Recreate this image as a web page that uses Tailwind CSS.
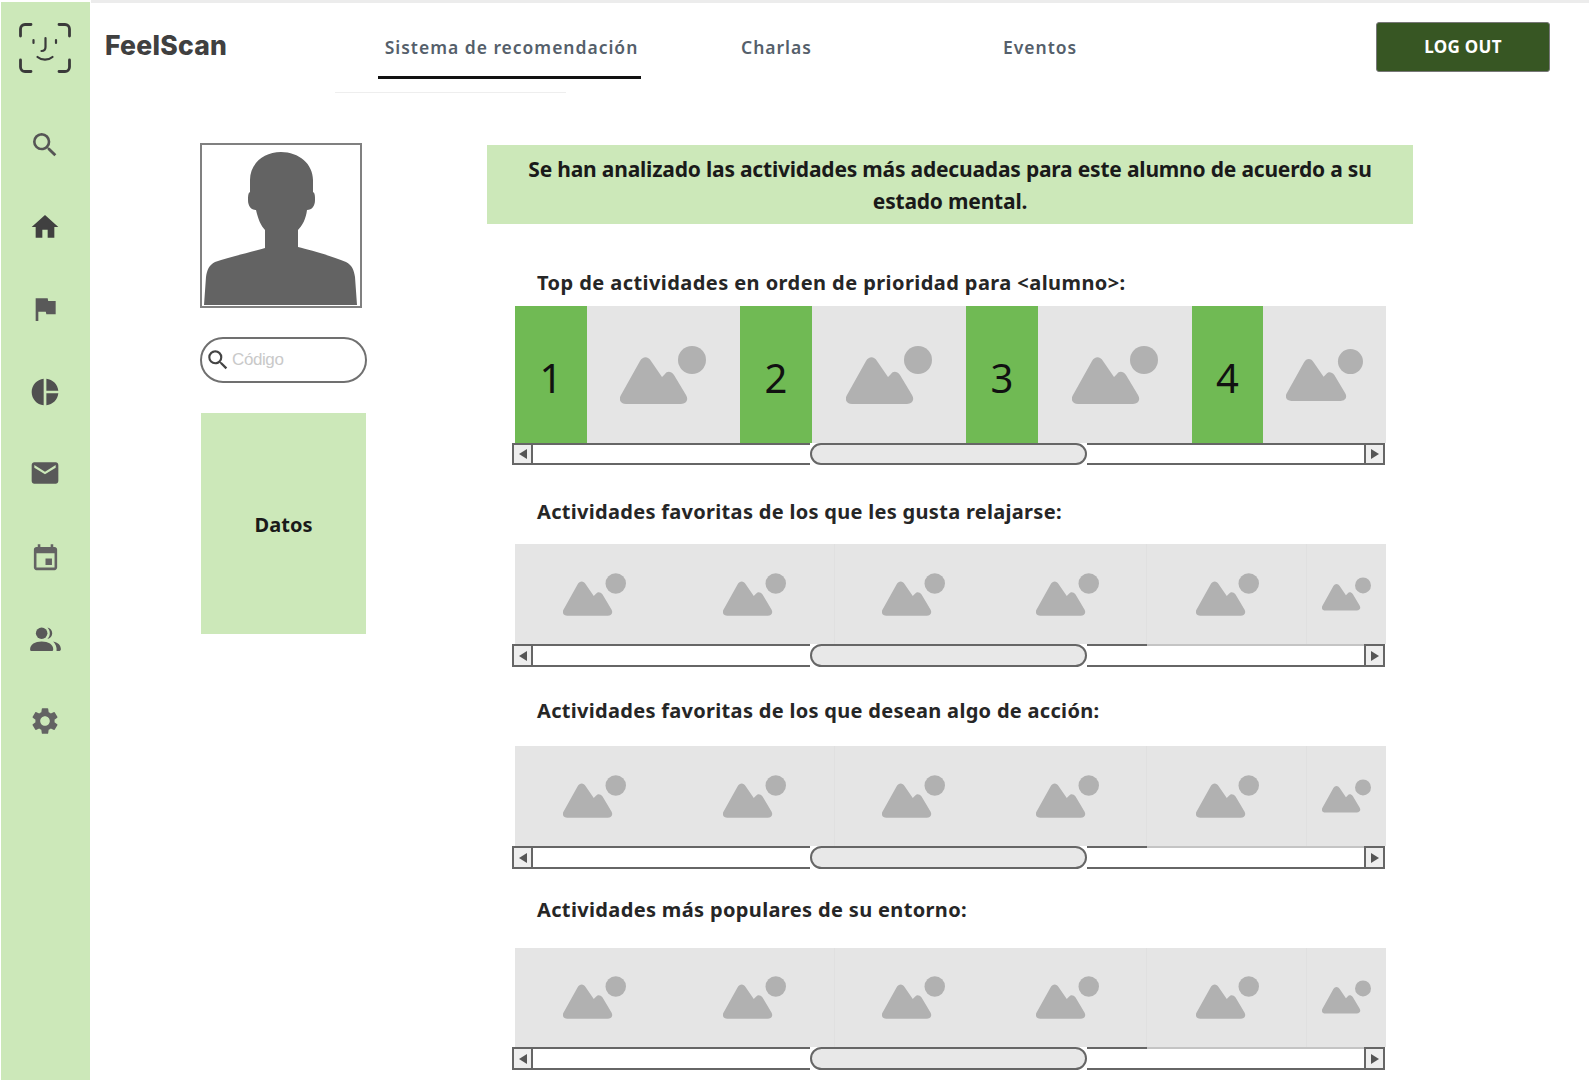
<!DOCTYPE html>
<html lang="es">
<head>
<meta charset="utf-8">
<title>FeelScan</title>
<script src="https://cdn.jsdelivr.net/npm/@tailwindcss/browser@4"></script>
</head>
<body class="w-[1589px] h-[1080px] overflow-hidden bg-white font-['Noto_Sans',sans-serif] text-[#262626]">
<svg class="hidden">
  <symbol id="ph" viewBox="0 0 86 58"><path fill="#b1b1b1" d="M6 58h55c5 0 8-4 5-9L54 29c-3-4-7-4-9-1l-3 3L31 15c-3-5-8-5-11 0L1 49c-3 5 0 9 5 9z"/><circle fill="#b1b1b1" cx="72" cy="14" r="14"/></symbol>
  <symbol id="tl" viewBox="0 0 10 12"><path fill="#555" d="M9 1v10L1 6z"/></symbol>
  <symbol id="tr" viewBox="0 0 10 12"><path fill="#555" d="M1 1v10l8-5z"/></symbol>
</svg>
<div class="flex h-[1080px]">
  <aside class="w-[89px] ml-[1px] mr-[1px] mt-[2px] pr-[1px] bg-[#cce8b9] flex flex-col items-center shrink-0">
    <div class="h-[102px] w-full pt-[21px] pl-[18px]">
      <svg width="52" height="50" viewBox="0 0 52 50" fill="none" stroke="#3a3a3a" stroke-width="2.8" stroke-linecap="round"><path d="M1.500 13V6a4.500 4.500 0 0 1 4.500-4.500H12M40 1.500h6A4.500 4.500 0 0 1 50.500 6v7M50.500 37v7a4.500 4.500 0 0 1-4.500 4.500H40M12 48.500H6A4.500 4.500 0 0 1 1.500 44v-7"/><path stroke-width="2.200" d="M14.500 17v3M37 17v3M26.500 15v9c0 3-1.500 4-4 4M18.500 34c4 3.500 11 3.500 15 0"/></svg>
    </div>
    <div class="h-[82px] flex items-center justify-center"><svg width="32" height="32" viewBox="0 0 24 24" fill="#555"><path d="M15.500 14h-.79l-.28-.27A6.471 6.471 0 0 0 16 9.500 6.500 6.500 0 1 0 9.500 16c1.610 0 3.090-.59 4.230-1.570l.27.28v.79l5 4.990L20.490 19l-4.990-5zm-6 0C7.010 14 5 11.990 5 9.500S7.010 5 9.500 5 14 7.010 14 9.500 11.990 14 9.500 14z"/></svg></div>
    <div class="h-[82px] flex items-center justify-center"><svg width="32" height="32" viewBox="0 0 24 24" fill="#404040"><path d="M10 20v-6h4v6h5v-8h3L12 3 2 12h3v8z"/></svg></div>
    <div class="h-[82px] flex items-center justify-center"><svg width="32" height="32" viewBox="0 0 24 24" fill="#595959"><path d="M14.400 6L14 4H5v17h2v-7h5.600l.4 2h7V6z"/></svg></div>
    <div class="h-[82px] flex items-center justify-center"><svg width="32" height="32" viewBox="0 0 24 24" fill="#505050" class="translate-y-[1px]"><path d="M11 2v20c-5.070-.5-9-4.790-9-10s3.930-9.500 9-10zm2.030 0v8.990H22c-.47-4.740-4.240-8.520-8.970-8.990zm0 11.010V22c4.740-.47 8.500-4.250 8.970-8.990h-8.970z"/></svg></div>
    <div class="h-[82px] flex items-center justify-center"><svg width="32" height="32" viewBox="0 0 24 24" fill="#595959"><path d="M20 4H4c-1.100 0-1.990.9-1.990 2L2 18c0 1.100.9 2 2 2h16c1.100 0 2-.9 2-2V6c0-1.100-.9-2-2-2zm0 4l-8 5-8-5V6l8 5 8-5v2z"/></svg></div>
    <div class="h-[82px] flex items-center justify-center"><svg width="31" height="31" viewBox="0 0 24 24" fill="#636363" class="translate-y-[3px]"><path d="M17 12h-5v5h5v-5zM16 1v2H8V1H6v2H5c-1.110 0-1.990.9-1.990 2L3 19c0 1.100.89 2 2 2h14c1.100 0 2-.9 2-2V5c0-1.100-.9-2-2-2h-1V1h-2zm3 18H5V8h14v11z"/></svg></div>
    <div class="h-[82px] flex items-center justify-center"><svg width="31" height="25" viewBox="0 0 32 26" fill="#595959" class="translate-y-[2px]"><circle cx="12" cy="6.500" r="6"/><path d="M1 25c-1 0-1-1-1-2 0-5 5-8 12-8s12 3 12 8c0 1 0 2-1 2z"/><path d="M18 .5c3 .5 5 3 5 6s-2 5.500-5 6c1.500-1.500 2.500-3.500 2.500-6S19.500 2 18 .5zM24 15c4.500 1 8 3.500 8 8 0 1-.5 2-1.500 2h-3c.5-4-1-7.500-3.500-10z"/></svg></div>
    <div class="h-[82px] flex items-center justify-center"><svg width="32" height="32" viewBox="0 0 24 24" fill="#636363" class="translate-y-[2px]"><path d="M19.140 12.940c.04-.3.06-.61.06-.94 0-.32-.02-.64-.07-.94l2.030-1.580a.49.49 0 0 0 .12-.61l-1.920-3.320a.488.488 0 0 0-.59-.22l-2.390.96c-.5-.38-1.030-.7-1.620-.94l-.36-2.540a.484.484 0 0 0-.48-.41h-3.840c-.24 0-.43.17-.47.41l-.36 2.540c-.59.24-1.130.57-1.620.94l-2.390-.96c-.22-.08-.47 0-.59.22L2.740 8.870c-.12.21-.08.47.12.61l2.030 1.580c-.05.3-.09.63-.09.94s.02.64.07.94l-2.030 1.580a.49.49 0 0 0-.12.61l1.920 3.320c.12.22.37.29.59.22l2.390-.96c.5.38 1.030.7 1.620.94l.36 2.540c.05.24.24.41.48.41h3.840c.24 0 .44-.17.47-.41l.36-2.540c.59-.24 1.130-.56 1.620-.94l2.390.96c.22.08.47 0 .59-.22l1.920-3.320c.12-.22.07-.47-.12-.61l-2.010-1.580zM12 15.600c-1.980 0-3.600-1.620-3.600-3.600s1.620-3.600 3.600-3.600 3.600 1.620 3.600 3.600-1.620 3.600-3.600 3.600z"/></svg></div>
  </aside>

  <div class="flex-1 flex flex-col min-w-0">
    <div class="h-[3px] bg-[#ececec] shrink-0"></div>
    <header class="h-[97px] flex shrink-0 relative">
      <div class="w-[287px] pl-[14px] pt-[23px] font-['Inter',sans-serif] font-extrabold text-[26.500px] leading-[38px] tracking-[0.25px] text-[#404040]">FeelScan</div>
      <nav class="w-[263px] h-[76px] border-b-[3px] border-[#111] text-center pt-[29px] text-[17.500px] leading-[30px] font-semibold text-[#555f6b] tracking-[0.98px] pl-[4px]">Sistema de recomendación</nav>
      <div class="w-[202px] pt-[29px] pl-[100px] text-[17.500px] leading-[30px] font-semibold text-[#555f6b] tracking-[0.98px] whitespace-nowrap">Charlas</div>
      <div class="w-[533px] pt-[29px] pl-[160px] text-[17.500px] leading-[30px] font-semibold text-[#555f6b] tracking-[0.98px] whitespace-nowrap">Eventos</div>
      <button class="w-[174px] h-[50px] mt-[19px] bg-[#375623] rounded-[3px] border border-[#777] text-white font-bold text-[17px] tracking-[0.3px] leading-[48px] text-center">LOG OUT</button>
      <div class="absolute left-[244px] top-[89px] w-[231px] h-[1px] bg-[#eeeeee]"></div>
    </header>

    <main class="flex flex-1 min-h-0">
      <div class="w-[167px] ml-[109px] pt-[43px] shrink-0">
        <div class="w-[162px] h-[165px] border-2 border-[#808080] overflow-hidden">
          <svg width="158" height="161" viewBox="2 2 158 161"><path fill="#636363" d="M81 9c-18 0-31 12-31 28v12c-2 1-2 4-2 8 0 6 3 10 8 10 2 9 5 16 9 20v18c-13 4-36 9-50 14-6 3-8 8-9 15l-2 28h153l-2-28c-1-7-3-12-9-15-14-6-36-12-48-15V87c4-4 8-11 9-20 5 0 8-4 8-10 0-4 0-7-2-8V37C113 21 99 9 81 9z"/></svg>
        </div>
        <div class="mt-[29px] w-[167px] h-[46px] rounded-full border-2 border-[#707070] flex items-center pl-[3px] font-['Liberation_Sans',sans-serif] text-[17px] text-[#c9c9c9] tracking-[-0.4px]">
          <svg width="26" height="26" viewBox="0 0 24 24" fill="#444"><path d="M15.500 14h-.79l-.28-.27A6.471 6.471 0 0 0 16 9.500 6.500 6.500 0 1 0 9.500 16c1.610 0 3.090-.59 4.230-1.570l.27.28v.79l5 4.990L20.490 19l-4.990-5zm-6 0C7.010 14 5 11.990 5 9.500S7.010 5 9.500 5 14 7.010 14 9.500 11.990 14 9.500 14z"/></svg>
          <span class="ml-[1px]">Código</span>
        </div>
        <div class="mt-[30px] ml-[1px] w-[165px] h-[221px] bg-[#cce8b9] flex items-center justify-center font-bold text-[20px] text-[#1a1a1a] pt-[3px]">Datos</div>
      </div>

      <div class="w-[926px] ml-[120px] pt-[45px] shrink-0">
        <div class="h-[79px] bg-[#cce8b9] text-center font-bold text-[21px] leading-[32px] pt-[8px] text-[#1a1a1a] tracking-[-0.2px] px-[20px]">Se han analizado las actividades más adecuadas para este alumno de acuerdo a su<br>estado mental.</div>

        <div class="ml-[25px] w-[873px]">
          <h2 class="mt-[44px] mb-[8px] ml-[25px] font-bold text-[20px] leading-[30px] text-[#262626] tracking-[0.43px]">Top de actividades en orden de prioridad para &lt;alumno&gt;:</h2>
          <div class="ml-[3px] w-[871px] h-[137px] bg-[#e5e5e5] flex">
            <div class="w-[72px] bg-[#70ba54] flex items-center justify-center text-[40px] text-[#111] pt-[6px]">1</div>
            <div class="w-[153px] flex items-center justify-center"><svg width="86" height="58" class="ml-[-1px]"><use href="#ph"/></svg></div>
            <div class="w-[72px] bg-[#70ba54] flex items-center justify-center text-[40px] text-[#111] pt-[6px]">2</div>
            <div class="w-[154px] flex items-center justify-center"><svg width="86" height="58" class="ml-[-1px]"><use href="#ph"/></svg></div>
            <div class="w-[72px] bg-[#70ba54] flex items-center justify-center text-[40px] text-[#111] pt-[6px]">3</div>
            <div class="w-[154px] flex items-center justify-center"><svg width="86" height="58" class="ml-[-1px]"><use href="#ph"/></svg></div>
            <div class="w-[71px] bg-[#70ba54] flex items-center justify-center text-[40px] text-[#111] pt-[6px]">4</div>
            <div class="flex-1 flex items-center justify-center"><svg width="77" height="52" class="ml-[-1px]"><use href="#ph"/></svg></div>
          </div>
          <div class="h-[22px] flex">
            <div class="w-[21px] border-2 border-[#666] bg-[#eeeeee] flex items-center justify-center shrink-0"><svg width="10" height="12"><use href="#tl"/></svg></div>
            <div class="w-[277px] border-y-2 border-[#666] bg-white"></div>
            <div class="w-[277px] rounded-full border-2 border-[#666] bg-[#e8e8e8]"></div>
            <div class="flex-1 border-y-2 border-[#666] bg-white"></div>
            <div class="w-[21px] border-2 border-[#666] bg-[#eeeeee] flex items-center justify-center shrink-0"><svg width="10" height="12"><use href="#tr"/></svg></div>
          </div>

          <h2 class="mt-[32px] mb-[17px] ml-[25px] font-bold text-[20px] leading-[30px] text-[#262626] tracking-[0.3px]">Actividades favoritas de los que les gusta relajarse:</h2>
          <div class="ml-[3px] w-[871px] h-[100px] bg-[#e5e5e5] flex">
            <div class="w-[160px] flex items-center justify-center"><svg width="63" height="43" class="ml-[-1px]"><use href="#ph"/></svg></div>
            <div class="w-[160px] flex items-center justify-center border-r border-[#e0e0e0]"><svg width="63" height="43"><use href="#ph"/></svg></div>
            <div class="w-[157px] flex items-center justify-center"><svg width="63" height="43"><use href="#ph"/></svg></div>
            <div class="w-[155px] flex items-center justify-center border-r border-[#e0e0e0]"><svg width="63" height="43" class="ml-[-3px]"><use href="#ph"/></svg></div>
            <div class="w-[160px] flex items-center justify-center border-r border-[#e0e0e0]"><svg width="63" height="43" class="ml-[1px]"><use href="#ph"/></svg></div>
            <div class="flex-1 flex items-center justify-center"><svg width="49" height="34" class="mt-[-1px]"><use href="#ph"/></svg></div>
          </div>
          <div class="h-[23px] flex">
            <div class="w-[21px] border-2 border-[#666] bg-[#eeeeee] flex items-center justify-center shrink-0"><svg width="10" height="12"><use href="#tl"/></svg></div>
            <div class="w-[277px] border-y-2 border-[#666] bg-white"></div>
            <div class="w-[277px] rounded-full border-2 border-[#666] bg-[#e8e8e8]"></div>
            <div class="w-[60px] border-y-2 border-[#666] bg-white"></div>
            <div class="flex-1 border-y-2 border-t-[#c4c4c4] border-b-[#666] bg-white"></div>
            <div class="w-[21px] border-2 border-[#666] bg-[#eeeeee] flex items-center justify-center shrink-0"><svg width="10" height="12"><use href="#tr"/></svg></div>
          </div>

          <h2 class="mt-[29px] mb-[20px] ml-[25px] font-bold text-[20px] leading-[30px] text-[#262626] tracking-[0.3px]">Actividades favoritas de los que desean algo de acción:</h2>
          <div class="ml-[3px] w-[871px] h-[100px] bg-[#e5e5e5] flex">
            <div class="w-[160px] flex items-center justify-center"><svg width="63" height="43" class="ml-[-1px]"><use href="#ph"/></svg></div>
            <div class="w-[160px] flex items-center justify-center border-r border-[#e0e0e0]"><svg width="63" height="43"><use href="#ph"/></svg></div>
            <div class="w-[157px] flex items-center justify-center"><svg width="63" height="43"><use href="#ph"/></svg></div>
            <div class="w-[155px] flex items-center justify-center border-r border-[#e0e0e0]"><svg width="63" height="43" class="ml-[-3px]"><use href="#ph"/></svg></div>
            <div class="w-[160px] flex items-center justify-center border-r border-[#e0e0e0]"><svg width="63" height="43" class="ml-[1px]"><use href="#ph"/></svg></div>
            <div class="flex-1 flex items-center justify-center"><svg width="49" height="34" class="mt-[-1px]"><use href="#ph"/></svg></div>
          </div>
          <div class="h-[23px] flex">
            <div class="w-[21px] border-2 border-[#666] bg-[#eeeeee] flex items-center justify-center shrink-0"><svg width="10" height="12"><use href="#tl"/></svg></div>
            <div class="w-[277px] border-y-2 border-[#666] bg-white"></div>
            <div class="w-[277px] rounded-full border-2 border-[#666] bg-[#e8e8e8]"></div>
            <div class="w-[60px] border-y-2 border-[#666] bg-white"></div>
            <div class="flex-1 border-y-2 border-t-[#c4c4c4] border-b-[#666] bg-white"></div>
            <div class="w-[21px] border-2 border-[#666] bg-[#eeeeee] flex items-center justify-center shrink-0"><svg width="10" height="12"><use href="#tr"/></svg></div>
          </div>

          <h2 class="mt-[26px] mb-[23px] ml-[25px] font-bold text-[20px] leading-[30px] text-[#262626] tracking-[0.35px]">Actividades más populares de su entorno:</h2>
          <div class="ml-[3px] w-[871px] h-[99px] bg-[#e5e5e5] flex">
            <div class="w-[160px] flex items-center justify-center"><svg width="63" height="43" class="ml-[-1px]"><use href="#ph"/></svg></div>
            <div class="w-[160px] flex items-center justify-center border-r border-[#e0e0e0]"><svg width="63" height="43"><use href="#ph"/></svg></div>
            <div class="w-[157px] flex items-center justify-center"><svg width="63" height="43"><use href="#ph"/></svg></div>
            <div class="w-[155px] flex items-center justify-center border-r border-[#e0e0e0]"><svg width="63" height="43" class="ml-[-3px]"><use href="#ph"/></svg></div>
            <div class="w-[160px] flex items-center justify-center border-r border-[#e0e0e0]"><svg width="63" height="43" class="ml-[1px]"><use href="#ph"/></svg></div>
            <div class="flex-1 flex items-center justify-center"><svg width="49" height="34" class="mt-[-1px]"><use href="#ph"/></svg></div>
          </div>
          <div class="h-[23px] flex">
            <div class="w-[21px] border-2 border-[#666] bg-[#eeeeee] flex items-center justify-center shrink-0"><svg width="10" height="12"><use href="#tl"/></svg></div>
            <div class="w-[277px] border-y-2 border-[#666] bg-white"></div>
            <div class="w-[277px] rounded-full border-2 border-[#666] bg-[#e8e8e8]"></div>
            <div class="w-[60px] border-y-2 border-[#666] bg-white"></div>
            <div class="flex-1 border-y-2 border-t-[#c4c4c4] border-b-[#666] bg-white"></div>
            <div class="w-[21px] border-2 border-[#666] bg-[#eeeeee] flex items-center justify-center shrink-0"><svg width="10" height="12"><use href="#tr"/></svg></div>
          </div>
        </div>
      </div>
    </main>
  </div>
</div>
</body>
</html>
